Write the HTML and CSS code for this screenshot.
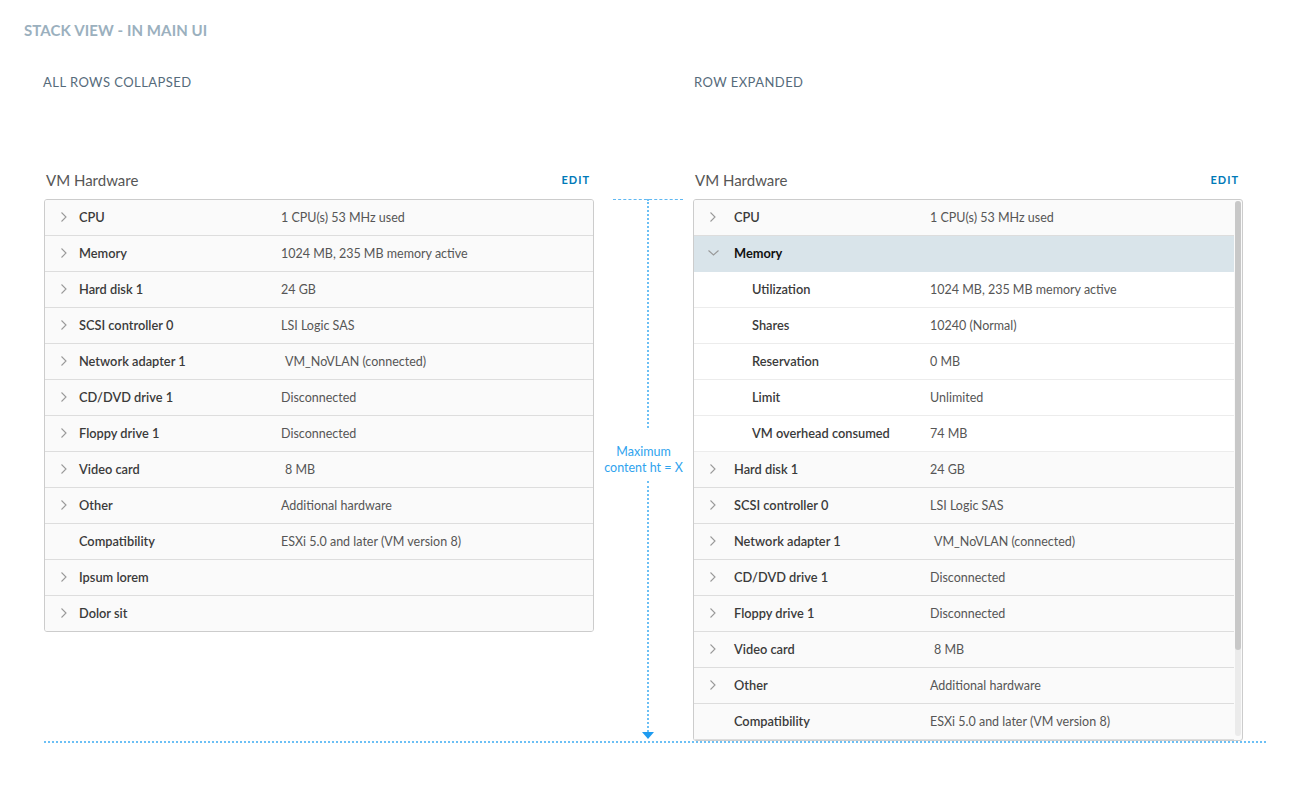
FILE: index.html
```html
<!DOCTYPE html>
<html lang="en">
<head>
<meta charset="utf-8">
<title>Stack View - In Main UI</title>
<link rel="stylesheet" href="styles.css">
</head>
<body>
<div class="page">
  <h1 class="page-title">STACK VIEW - IN MAIN UI</h1>

  <div class="board">
    <div class="col-label">ALL ROWS COLLAPSED</div>
    <div class="col-label col-label--right">ROW EXPANDED</div>

    <div class="panel-head">
      <span class="panel-title">VM Hardware</span>
      <a class="edit">EDIT</a>
    </div>
    <div class="spacer"></div>
    <div class="panel-head">
      <span class="panel-title">VM Hardware</span>
      <a class="edit">EDIT</a>
    </div>

    <!-- Collapsed stack -->
    <div class="card card--left">
      <div class="row"><span class="chev"><svg viewBox="0 0 6 10"><path d="M0.5 0.5 L5 5 L0.5 9.5"/></svg></span><span class="lbl">CPU</span><span class="val">1 CPU(s) 53 MHz used</span></div>
      <div class="row"><span class="chev"><svg viewBox="0 0 6 10"><path d="M0.5 0.5 L5 5 L0.5 9.5"/></svg></span><span class="lbl">Memory</span><span class="val">1024 MB, 235 MB memory active</span></div>
      <div class="row"><span class="chev"><svg viewBox="0 0 6 10"><path d="M0.5 0.5 L5 5 L0.5 9.5"/></svg></span><span class="lbl">Hard disk 1</span><span class="val">24 GB</span></div>
      <div class="row"><span class="chev"><svg viewBox="0 0 6 10"><path d="M0.5 0.5 L5 5 L0.5 9.5"/></svg></span><span class="lbl">SCSI controller 0</span><span class="val">LSI Logic SAS</span></div>
      <div class="row"><span class="chev"><svg viewBox="0 0 6 10"><path d="M0.5 0.5 L5 5 L0.5 9.5"/></svg></span><span class="lbl">Network adapter 1</span><span class="val val--pad">VM_NoVLAN (connected)</span></div>
      <div class="row"><span class="chev"><svg viewBox="0 0 6 10"><path d="M0.5 0.5 L5 5 L0.5 9.5"/></svg></span><span class="lbl">CD/DVD drive 1</span><span class="val">Disconnected</span></div>
      <div class="row"><span class="chev"><svg viewBox="0 0 6 10"><path d="M0.5 0.5 L5 5 L0.5 9.5"/></svg></span><span class="lbl">Floppy drive 1</span><span class="val">Disconnected</span></div>
      <div class="row"><span class="chev"><svg viewBox="0 0 6 10"><path d="M0.5 0.5 L5 5 L0.5 9.5"/></svg></span><span class="lbl">Video card</span><span class="val val--pad">8 MB</span></div>
      <div class="row"><span class="chev"><svg viewBox="0 0 6 10"><path d="M0.5 0.5 L5 5 L0.5 9.5"/></svg></span><span class="lbl">Other</span><span class="val">Additional hardware</span></div>
      <div class="row"><span class="chev"></span><span class="lbl">Compatibility</span><span class="val">ESXi 5.0 and later (VM version 8)</span></div>
      <div class="row"><span class="chev"><svg viewBox="0 0 6 10"><path d="M0.5 0.5 L5 5 L0.5 9.5"/></svg></span><span class="lbl">Ipsum lorem</span><span class="val"></span></div>
      <div class="row"><span class="chev"><svg viewBox="0 0 6 10"><path d="M0.5 0.5 L5 5 L0.5 9.5"/></svg></span><span class="lbl">Dolor sit</span><span class="val"></span></div>
    </div>

    <!-- Height indicator -->
    <div class="measure">
      <div class="measure-top"></div>
      <div class="measure-line measure-line--upper"></div>
      <div class="measure-text">Maximum<br>content ht = X</div>
      <div class="measure-line measure-line--lower"></div>
      <div class="measure-arrow"></div>
    </div>

    <!-- Expanded stack -->
    <div class="card card--right">
      <div class="card-body">
        <div class="row"><span class="chev"><svg viewBox="0 0 6 10"><path d="M0.5 0.5 L5 5 L0.5 9.5"/></svg></span><span class="lbl">CPU</span><span class="val">1 CPU(s) 53 MHz used</span></div>
        <div class="row row--open"><span class="chev chev--down"><svg viewBox="0 0 11 6"><path d="M0.5 0.5 L5.5 5 L10.5 0.5"/></svg></span><span class="lbl">Memory</span><span class="val"></span></div>
        <div class="row row--sub"><span class="chev"></span><span class="lbl">Utilization</span><span class="val">1024 MB, 235 MB memory active</span></div>
        <div class="row row--sub"><span class="chev"></span><span class="lbl">Shares</span><span class="val">10240 (Normal)</span></div>
        <div class="row row--sub"><span class="chev"></span><span class="lbl">Reservation</span><span class="val">0 MB</span></div>
        <div class="row row--sub"><span class="chev"></span><span class="lbl">Limit</span><span class="val">Unlimited</span></div>
        <div class="row row--sub"><span class="chev"></span><span class="lbl">VM overhead consumed</span><span class="val">74 MB</span></div>
        <div class="row"><span class="chev"><svg viewBox="0 0 6 10"><path d="M0.5 0.5 L5 5 L0.5 9.5"/></svg></span><span class="lbl">Hard disk 1</span><span class="val">24 GB</span></div>
        <div class="row"><span class="chev"><svg viewBox="0 0 6 10"><path d="M0.5 0.5 L5 5 L0.5 9.5"/></svg></span><span class="lbl">SCSI controller 0</span><span class="val">LSI Logic SAS</span></div>
        <div class="row"><span class="chev"><svg viewBox="0 0 6 10"><path d="M0.5 0.5 L5 5 L0.5 9.5"/></svg></span><span class="lbl">Network adapter 1</span><span class="val val--pad">VM_NoVLAN (connected)</span></div>
        <div class="row"><span class="chev"><svg viewBox="0 0 6 10"><path d="M0.5 0.5 L5 5 L0.5 9.5"/></svg></span><span class="lbl">CD/DVD drive 1</span><span class="val">Disconnected</span></div>
        <div class="row"><span class="chev"><svg viewBox="0 0 6 10"><path d="M0.5 0.5 L5 5 L0.5 9.5"/></svg></span><span class="lbl">Floppy drive 1</span><span class="val">Disconnected</span></div>
        <div class="row"><span class="chev"><svg viewBox="0 0 6 10"><path d="M0.5 0.5 L5 5 L0.5 9.5"/></svg></span><span class="lbl">Video card</span><span class="val val--pad">8 MB</span></div>
        <div class="row"><span class="chev"><svg viewBox="0 0 6 10"><path d="M0.5 0.5 L5 5 L0.5 9.5"/></svg></span><span class="lbl">Other</span><span class="val">Additional hardware</span></div>
        <div class="row"><span class="chev"></span><span class="lbl">Compatibility</span><span class="val">ESXi 5.0 and later (VM version 8)</span></div>
      </div>
      <div class="scrollbar"><div class="scroll-thumb"></div></div>
    </div>
  </div>

  <div class="baseline"></div>
</div>
</body>
</html>
```
FILE: styles.css
```css
* { box-sizing: border-box; }

html, body {
  margin: 0;
  padding: 0;
  background: #ffffff;
}

body {
  font-family: Lato, "Open Sans", "Liberation Sans", sans-serif;
  color: #565656;
}

.page {
  padding: 20px 23px 0 24px;
}

.page-title {
  margin: 0;
  font-size: 15px;
  line-height: 20px;
  font-weight: 700;
  color: #9bb0be;
  letter-spacing: 0.1px;
}

.board {
  display: grid;
  grid-template-columns: 550px 99px 550px;
  margin-top: 34px;
  margin-left: 20px;
}

.col-label {
  grid-column: 1;
  font-size: 13px;
  line-height: 16px;
  color: #566b7b;
  letter-spacing: 0.45px;
  margin-left: -1px;
  margin-bottom: 81px;
}

.col-label--right {
  grid-column: 3;
  margin-left: 1px;
}

.panel-head {
  display: flex;
  justify-content: space-between;
  align-items: center;
  height: 20px;
  padding: 0 4px 0 2px;
  margin-bottom: 8px;
}

.panel-title {
  font-size: 15px;
  color: #565656;
  margin-top: -2px;
}

.edit {
  font-size: 11px;
  font-weight: 700;
  letter-spacing: 1px;
  color: #0079b8;
  cursor: pointer;
  margin-top: -4px;
}

.card {
  border: 1px solid #cccccc;
  border-radius: 3px;
  background: #fafafa;
  overflow: hidden;
}

.card--left {
  align-self: start;
}

.card--right {
  display: flex;
  height: 542px;
}

.card-body {
  flex: 1;
  overflow: hidden;
}

.row {
  display: flex;
  align-items: center;
  height: 36px;
  padding-bottom: 2px;
  border-bottom: 1px solid #dddddd;
  background: #fafafa;
  font-size: 13px;
}

.card--left .row:last-child {
  height: 35px;
  border-bottom: none;
}

.chev {
  display: flex;
  align-items: center;
  width: 34px;
  padding-left: 16px;
  flex: none;
}

.card--right .chev {
  width: 40px;
}

.chev svg {
  width: 6px;
  height: 10px;
  fill: none;
  stroke: #9a9a9a;
  stroke-width: 1.1;
}

.chev--down {
  padding-left: 14px;
}

.chev--down svg {
  width: 11px;
  height: 6px;
}

.lbl {
  flex: none;
  color: #3a3a3a;
  font-weight: 600;
  font-size: 12.8px;
}

.card--left .lbl {
  width: 202px;
}

.card--right .lbl {
  width: 196px;
}

.row--sub {
  background: #ffffff;
  border-bottom-color: #ececec;
}

.card--right .row--sub .lbl {
  width: 178px;
  margin-left: 18px;
}

.row--open {
  background: #d9e4ea;
  border-bottom-color: #d9e4ea;
}

.row--open .lbl {
  color: #111111;
  font-weight: 700;
}

.val {
  color: #565656;
  white-space: nowrap;
  font-size: 12.5px;
  margin-top: 2px;
}

.val--pad {
  padding-left: 4px;
}

.scrollbar {
  flex: none;
  width: 6px;
  margin: 1px 1px 4px 1px;
  background: #ebebeb;
  border-radius: 3px;
  display: flex;
  flex-direction: column;
}

.scroll-thumb {
  height: 449px;
  background: #c8c8c8;
  border-radius: 3px;
}

/* height indicator */
.measure {
  display: flex;
  flex-direction: column;
  align-items: center;
  padding-left: 8px;
}

.measure-top {
  width: 70px;
  border-top: 1px dashed #5fb8f2;
}

.measure-line {
  width: 0;
  border-left: 2px dotted #6cc0f5;
}

.measure-line--upper {
  height: 229px;
  margin-top: -1px;
}

.measure-line--lower {
  flex: 1;
}

.measure-text {
  margin: 16px 8px 5px 0;
  font-size: 12.5px;
  line-height: 16px;
  color: #2fa3ee;
  text-align: center;
  white-space: nowrap;
}

.measure-arrow {
  width: 0;
  height: 0;
  border-left: 6px solid transparent;
  border-right: 6px solid transparent;
  border-top: 7px solid #1e9bf0;
  margin-bottom: 2px;
}

.baseline {
  margin-left: 20px;
  width: 1222px;
  border-top: 2px dotted #6cc0f5;
}
```
